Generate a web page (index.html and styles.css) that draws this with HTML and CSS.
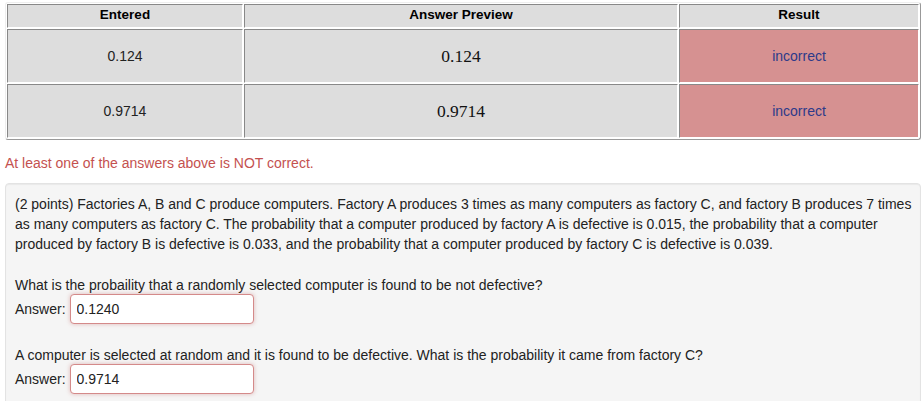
FILE: index.html
```html
<!DOCTYPE html>
<html lang="en">
<head>
    <meta charset="UTF-8">
    <title>Problem 5</title>
    <link rel="stylesheet" href="styles.css">
</head>
<body>
    <table class="attempt-results">
        <tr>
            <th class="col-entered">Entered</th>
            <th>Answer Preview</th>
            <th class="col-result">Result</th>
        </tr>
        <tr>
            <td>0.124</td>
            <td class="preview">0.124</td>
            <td class="incorrect">incorrect</td>
        </tr>
        <tr>
            <td>0.9714</td>
            <td class="preview">0.9714</td>
            <td class="incorrect">incorrect</td>
        </tr>
    </table>

    <div class="results-message">At least one of the answers above is NOT correct.</div>

    <div class="problem-body">
        <p class="intro">(2 points) Factories A, B and C produce computers. Factory A produces 3 times as many computers as factory C, and factory B produces 7 times as many computers as factory C. The probability that a computer produced by factory A is defective is 0.015, the probability that a computer produced by factory B is defective is 0.033, and the probability that a computer produced by factory C is defective is 0.039.</p>

        <p>What is the probaility that a randomly selected computer is found to be not defective?</p>
        <div class="answer-line">
            <label for="ans1">Answer:</label>
            <input id="ans1" class="answer-input" type="text" value="0.1240">
        </div>

        <p>A computer is selected at random and it is found to be defective. What is the probability it came from factory C?</p>
        <div class="answer-line">
            <label for="ans2">Answer:</label>
            <input id="ans2" class="answer-input" type="text" value="0.9714">
        </div>
    </div>
</body>
</html>
```

FILE: styles.css
```css
body {
    margin: 0;
    padding: 2px 3px 0 5px;
    background: #ffffff;
    font-family: "Liberation Sans", Arial, sans-serif;
    font-size: 14px;
    line-height: 20px;
    color: #333333;
}
.attempt-results {
    width: 100%;
    border-collapse: separate;
    border-spacing: 1px;
    border: 1px solid;
    border-color: #eeeeee #999999 #999999 #eeeeee;
    border-radius: 3px;
    table-layout: fixed;
}
.attempt-results th,
.attempt-results td {
    background: #dddddd;
    border: 1px solid;
    border-color: #888888 #ffffff #ffffff #888888;
    text-align: center;
    color: #222222;
}
.attempt-results th {
    height: 20px;
    padding: 0 0 2px;
    font-weight: bold;
    font-size: 13.5px;
    color: #000000;
}
.attempt-results td {
    height: 52px;
    padding: 0;
}
.col-entered {
    width: 234px;
}
.col-result {
    width: 238px;
}
.attempt-results td.preview {
    font-family: "Liberation Serif", "Times New Roman", serif;
    font-size: 17.5px;
    color: #111111;
}
.attempt-results td.incorrect {
    background: #d69191;
    color: #2d3a8a;
}
.results-message {
    margin: 13px 0 10px;
    color: #c4514f;
}
.problem-body {
    background: #f5f5f5;
    border: 1px solid #e3e3e3;
    border-radius: 4px;
    padding: 10px 5px 19px 9px;
    min-height: 200px;
    box-shadow: inset 0 1px 1px rgba(0, 0, 0, 0.05);
    color: #222222;
}
.problem-body p {
    margin: 0 0 20px;
}
.problem-body p.intro {
    margin-bottom: 21px;
}
.problem-body p + .answer-line {
    margin-top: -21px;
}
.answer-line {
    display: flex;
    align-items: center;
    gap: 4px;
    height: 30px;
    margin-bottom: 21px;
}
.answer-input {
    box-sizing: border-box;
    width: 184px;
    height: 30px;
    padding: 4px 6px;
    border: 1px solid #d48a8a;
    border-radius: 4px;
    background: #ffffff;
    font-family: "Liberation Sans", Arial, sans-serif;
    font-size: 14px;
    color: #222222;
    box-shadow: 0 0 4px rgba(185, 74, 72, 0.35);
}
```
